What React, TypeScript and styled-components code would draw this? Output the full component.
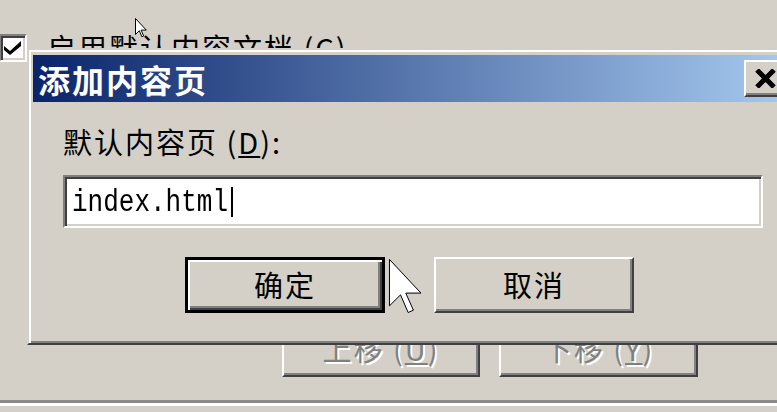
import React from "react";
import styled, { createGlobalStyle, css } from "styled-components";

const FACE = "#d4d0c8";
const CJK = `"Noto Sans CJK SC", "Noto Sans", sans-serif`;

const Global = createGlobalStyle`
  html, body { margin: 0; padding: 0; background: ${FACE}; }
  body { width: 777px; height: 412px; overflow: hidden; }
`;

const Screen = styled.div`
  position: relative;
  width: 777px;
  height: 412px;
  overflow: hidden;
  background: ${FACE};
  font-family: ${CJK};
  color: #000;
`;

const PropertyPage = styled.div`
  display: flex;
  flex-direction: column;
  box-sizing: border-box;
  height: 100%;
  padding-top: 34px;
`;

const CheckRow = styled.div`
  display: flex;
  align-items: flex-start;
  gap: 20px;
  margin-left: -1px;
  height: 30px;
`;

const CheckBox = styled.div`
  box-sizing: border-box;
  width: 28px;
  height: 28px;
  background: #fff;
  border: 2px solid;
  border-color: #808080 #fff #fff #808080;
  box-shadow: inset 2px 2px 0 #404040, inset -2px -2px 0 ${FACE};
  display: flex;
  align-items: center;
  justify-content: center;
`;

const CheckLabel = styled.span`
  font-size: 29px;
  line-height: 30px;
  letter-spacing: 2px;
  margin-top: -2px;
  white-space: nowrap;
`;

const MoveButtons = styled.div`
  display: flex;
  gap: 19px;
  padding-left: 282px;
  margin-top: 257px;
`;

const Separator = styled.div`
  margin-top: 23px;
  height: 3px;
  background: #8a8a8a;
  border-bottom: 3px solid #fff;
`;

const Button = styled.button<{ $default?: boolean; $disabled?: boolean; $w?: number }>`
  box-sizing: border-box;
  width: ${(p) => p.$w ?? 200}px;
  height: 56px;
  margin: 0;
  padding: 0 0 2px 0;
  display: flex;
  align-items: center;
  justify-content: center;
  background: ${FACE};
  font-family: ${CJK};
  font-size: 29px;
  letter-spacing: 2px;
  color: #000;
  border: 2px solid;
  border-color: #fff #404040 #404040 #fff;
  box-shadow: inset -2px -2px 0 #808080;
  ${(p) =>
    p.$default &&
    css`
      border: 3px solid #000;
      box-shadow: inset 2px 2px 0 #fff, inset -2px -2px 0 #404040, inset -4px -4px 0 #808080;
    `}
  ${(p) =>
    p.$disabled &&
    css`
      color: #808080;
      text-shadow: 2px 2px 0 #fff;
    `}
`;

const Dialog = styled.div`
  position: absolute;
  left: 27px;
  top: 48px;
  width: 771px;
  height: 297px;
  box-sizing: border-box;
  background: ${FACE};
  border: 2px solid;
  border-color: ${FACE} #404040 #404040 ${FACE};
  box-shadow: inset 2px 2px 0 #fff, inset -2px -2px 0 #808080;
  padding: 5px 4px 4px 4px;
  display: flex;
  flex-direction: column;
`;

const TitleBar = styled.div`
  height: 47px;
  flex: none;
  display: flex;
  align-items: center;
  justify-content: space-between;
  padding: 0 5px 0 5px;
  background: linear-gradient(to right, #0a246a, #a6caf0);
`;

const Title = styled.span`
  color: #fff;
  font-weight: 700;
  font-size: 32px;
  letter-spacing: 2px;
  line-height: 1;
`;

const CloseButton = styled.div`
  box-sizing: border-box;
  width: 43px;
  height: 37px;
  background: ${FACE};
  border: 2px solid;
  border-color: #fff #404040 #404040 #fff;
  box-shadow: inset -2px -2px 0 #808080;
  display: flex;
  align-items: center;
  justify-content: center;
`;

const Body = styled.div`
  display: flex;
  flex-direction: column;
  padding: 24px 0 0 30px;
`;

const FieldLabel = styled.label`
  font-size: 29px;
  line-height: 30px;
  height: 30px;
  letter-spacing: 2px;
  white-space: nowrap;
`;

const TextField = styled.div`
  margin-top: 19px;
  box-sizing: border-box;
  width: 700px;
  height: 53px;
  background: #fff;
  border: 2px solid;
  border-color: #808080 #fff #fff #808080;
  box-shadow: inset 2px 2px 0 #404040, inset -2px -2px 0 ${FACE};
  padding-left: 7px;
  display: flex;
  align-items: center;
`;

const FieldText = styled.span`
  display: inline-block;
  font-family: "Liberation Mono", monospace;
  font-size: 26px;
  line-height: 30px;
  transform: scaleY(1.2);
  margin-top: 2px;
`;

const Caret = styled.span`
  display: inline-block;
  width: 2px;
  height: 30px;
  margin-left: 3px;
  background: #000;
`;

const DialogButtons = styled.div`
  display: flex;
  gap: 49px;
  margin-top: 29px;
  padding-left: 122px;
`;

const Pointer = styled.svg<{ $x: number; $y: number }>`
  position: absolute;
  left: ${(p) => p.$x}px;
  top: ${(p) => p.$y}px;
  overflow: visible;
`;

const ARROW = "M0.5 0.5 V16.5 L4.3 12.7 L6.9 18.8 L8.7 18 L6.1 12.1 H11.3 Z";

const Cursor = ({ x, y, w, h }: { x: number; y: number; w: number; h: number }) => (
  <Pointer $x={x} $y={y} width={w} height={h} viewBox="0 0 12 20" preserveAspectRatio="none">
    <path d={ARROW} fill="#fff" stroke="#000" strokeWidth={1} strokeLinejoin="miter" vectorEffect="non-scaling-stroke" />
  </Pointer>
);

export default function App() {
  return (
    <Screen>
      <Global />
      <PropertyPage>
        <CheckRow>
          <CheckBox>
            <svg width="18" height="14" viewBox="0 0 18 14">
              <polygon points="0,5 6,10 17,0 17,5 6,14 0,9" fill="#000" />
            </svg>
          </CheckBox>
          <CheckLabel>
            启用默认内容文档 (<u>C</u>)
          </CheckLabel>
        </CheckRow>
        <MoveButtons>
          <Button $disabled $w={198}>
            上移 (<u>U</u>)
          </Button>
          <Button $disabled $w={199}>
            下移 (<u>Y</u>)
          </Button>
        </MoveButtons>
        <Separator />
      </PropertyPage>
      <Cursor x={135} y={18} w={12} h={20} />

      <Dialog>
        <TitleBar>
          <Title>添加内容页</Title>
          <CloseButton>
            <svg width="21" height="19" viewBox="0 0 21 19">
              <path d="M2 1 L19 18 M19 1 L2 18" stroke="#000" strokeWidth="5" />
            </svg>
          </CloseButton>
        </TitleBar>
        <Body>
          <FieldLabel>
            默认内容页 (<u>D</u>):
          </FieldLabel>
          <TextField>
            <FieldText>index.html</FieldText>
            <Caret />
          </TextField>
          <DialogButtons>
            <Button $default>确定</Button>
            <Button>取消</Button>
          </DialogButtons>
        </Body>
      </Dialog>
      <Cursor x={388} y={258} w={35} h={58} />
    </Screen>
  );
}
